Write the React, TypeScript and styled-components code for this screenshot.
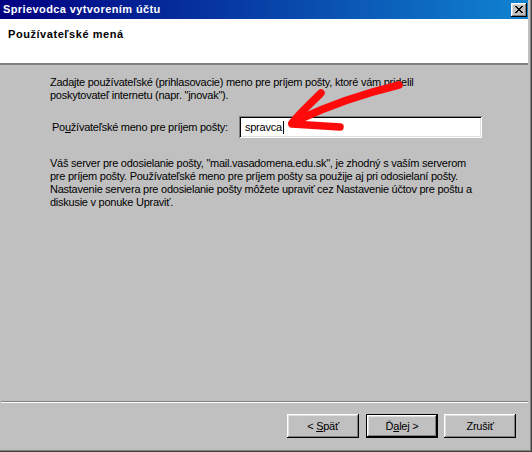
import React from "react";
import styled, { createGlobalStyle, css } from "styled-components";

const GlobalStyle = createGlobalStyle`
  html, body { margin: 0; padding: 0; background: #c0c0c0; }
  body { font-family: "Liberation Sans", Arial, sans-serif; }
  * { box-sizing: border-box; }
`;

const Window = styled.div`
  position: relative;
  width: 532px;
  height: 452px;
  display: flex;
  flex-direction: column;
  background: #c0c0c0;
  padding: 0 4px 4px 0;
  box-shadow: inset -1px -1px #404040, inset -2px -2px #808080;
  overflow: hidden;
`;

const TitleBar = styled.div`
  height: 19px;
  flex: none;
  display: flex;
  align-items: center;
  justify-content: space-between;
  padding-left: 3px;
  background: linear-gradient(to right, #000080, #1084d0);
`;

const TitleText = styled.span`
  color: #fff;
  font-weight: bold;
  font-size: 11px;
  letter-spacing: 0.4px;
  line-height: 13px;
  white-space: nowrap;
`;

const CloseBox = styled.div`
  width: 16px;
  height: 14px;
  margin-right: 1px;
  background: #c0c0c0;
  display: flex;
  align-items: flex-start;
  justify-content: flex-start;
  padding: 3px 0 0 4px;
  box-shadow: inset -1px -1px #000, inset 1px 1px #fff, inset -2px -2px #808080, inset 2px 2px #dfdfdf;
`;

const Header = styled.div`
  height: 46px;
  flex: none;
  background: #fff;
  padding: 9px 0 0 8px;
  box-shadow: inset 0 -2px #808080, inset 0 -1px #fff;
`;

const HeaderTitle = styled.div`
  font-weight: bold;
  font-size: 11px;
  line-height: 13px;
  letter-spacing: 0.55px;
  color: #000;
`;

const Body = styled.div`
  flex: 1;
  padding: 11px 0 0 50px;
`;

const Para = styled.p<{ $top?: number }>`
  margin: ${(p) => p.$top ?? 0}px 0 0 0;
  font-size: 11px;
  line-height: 13px;
  letter-spacing: -0.25px;
  color: #000;
  white-space: nowrap;
`;

const FieldRow = styled.div`
  margin-top: 14px;
  padding-left: 2px;
  display: flex;
  align-items: center;
`;

const Label = styled.label`
  width: 187px;
  flex: none;
  font-size: 11px;
  line-height: 13px;
  letter-spacing: -0.25px;
  color: #000;
  white-space: nowrap;
`;

const Field = styled.div`
  width: 243px;
  height: 22px;
  background: #fff;
  display: flex;
  align-items: center;
  padding-left: 6px;
  font-size: 11px;
  line-height: 13px;
  letter-spacing: -0.25px;
  color: #000;
  box-shadow: inset 1px 1px #808080, inset -1px -1px #fff, inset 2px 2px #000, inset -2px -2px #dfdfdf;
`;

const Caret = styled.span`
  display: inline-block;
  width: 1px;
  height: 13px;
  background: #000;
  margin-left: 1px;
`;

const Separator = styled.div`
  flex: none;
  height: 2px;
  margin-left: 1px;
  border-top: 1px solid #808080;
  border-bottom: 1px solid #fff;
`;

const Footer = styled.div`
  flex: none;
  height: 45px;
  display: flex;
  justify-content: flex-end;
  align-items: flex-start;
  padding: 11px 12px 0 0;
`;

const Button = styled.button<{ $default?: boolean; $gap?: number }>`
  width: 72px;
  height: 24px;
  margin: 0 0 0 ${(p) => p.$gap ?? 0}px;
  padding: 0;
  background: #c0c0c0;
  border: none;
  font-family: "Liberation Sans", Arial, sans-serif;
  font-size: 11px;
  letter-spacing: -0.25px;
  color: #000;
  box-shadow: inset -1px -1px #000, inset 1px 1px #fff, inset -2px -2px #808080, inset 2px 2px #dfdfdf;
  ${(p) =>
    p.$default &&
    css`
      box-shadow: inset 0 0 0 1px #000, inset -2px -2px #000, inset 2px 2px #fff, inset -3px -3px #808080,
        inset 3px 3px #dfdfdf;
    `}
`;

const Acc = styled.span`
  text-decoration: underline;
`;

const Overlay = styled.svg`
  position: absolute;
  left: 0;
  top: 0;
  pointer-events: none;
`;

const CloseGlyph = () => {
  const rows = ["11000011", "01100110", "00111100", "00011000", "00111100", "01100110", "11000011"];
  return (
    <svg width="8" height="7" viewBox="0 0 8 7" shapeRendering="crispEdges">
      {rows.flatMap((r, y) =>
        r.split("").map((c, x) => (c === "1" ? <rect key={`${x}-${y}`} x={x} y={y} width="1" height="1" fill="#000" /> : null))
      )}
    </svg>
  );
};

export default function App() {
  return (
    <>
      <GlobalStyle />
      <Window>
        <TitleBar>
          <TitleText>Sprievodca vytvorením účtu</TitleText>
          <CloseBox>
            <CloseGlyph />
          </CloseBox>
        </TitleBar>
        <Header>
          <HeaderTitle>Používateľské mená</HeaderTitle>
        </Header>
        <Body>
          <Para>
            Zadajte používateľské (prihlasovacie) meno pre príjem pošty, ktoré vám pridelil
            <br />
            poskytovateľ internetu (napr. "jnovak").
          </Para>
          <FieldRow>
            <Label>
              Po<Acc>u</Acc>žívateľské meno pre príjem pošty:
            </Label>
            <Field>
              spravca
              <Caret />
            </Field>
          </FieldRow>
          <Para $top={19}>
            Váš server pre odosielanie pošty, "mail.vasadomena.edu.sk", je zhodný s vaším serverom
            <br />
            pre príjem pošty. Používateľské meno pre príjem pošty sa použije aj pri odosielaní pošty.
            <br />
            Nastavenie servera pre odosielanie pošty môžete upraviť cez Nastavenie účtov pre poštu a
            <br />
            diskusie v ponuke Upraviť.
          </Para>
        </Body>
        <Separator />
        <Footer>
          <Button>
            &lt; <Acc>S</Acc>päť
          </Button>
          <Button $default $gap={7}>
            Ď<Acc>a</Acc>lej &gt;
          </Button>
          <Button $gap={6}>Zrušiť</Button>
        </Footer>
        <Overlay width="532" height="452" viewBox="0 0 532 452">
          <g fill="none" stroke="#ff0a0a" strokeWidth="7.5" strokeLinecap="round" strokeLinejoin="round">
            <path d="M399 85 C370 92 332 104 298 120" />
            <path d="M321 93 C311 103 300 113 292 123" />
            <path d="M292 124 C308 125 325 126 340 127" />
          </g>
        </Overlay>
      </Window>
    </>
  );
}
